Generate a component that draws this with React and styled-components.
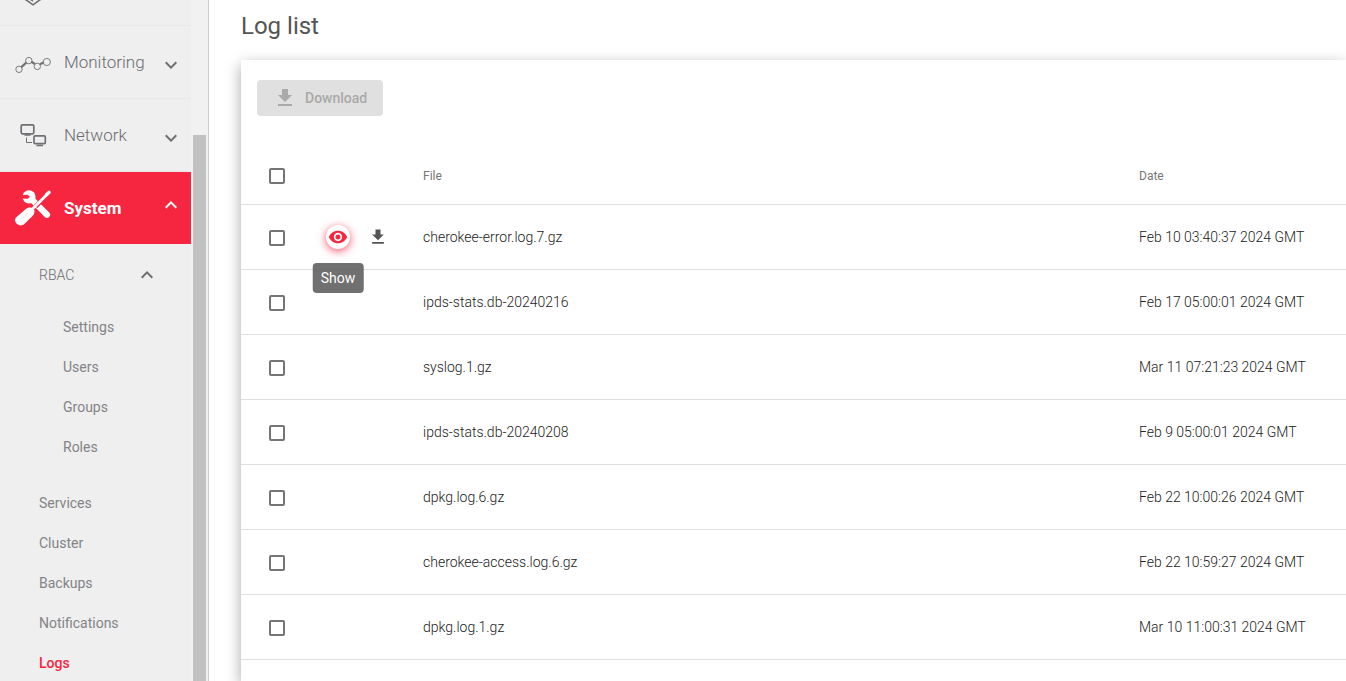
import React, { useState } from "react";
import styled, { createGlobalStyle } from "styled-components";
import {
  MdExpandLess,
  MdExpandMore,
  MdFileDownload,
  MdVisibility,
} from "react-icons/md";

const logs = [
  { file: "cherokee-error.log.7.gz", date: "Feb 10 03:40:37 2024 GMT" },
  { file: "ipds-stats.db-20240216", date: "Feb 17 05:00:01 2024 GMT" },
  { file: "syslog.1.gz", date: "Mar 11 07:21:23 2024 GMT" },
  { file: "ipds-stats.db-20240208", date: "Feb 9 05:00:01 2024 GMT" },
  { file: "dpkg.log.6.gz", date: "Feb 22 10:00:26 2024 GMT" },
  { file: "cherokee-access.log.6.gz", date: "Feb 22 10:59:27 2024 GMT" },
  { file: "dpkg.log.1.gz", date: "Mar 10 11:00:31 2024 GMT" },
];

const rbacLinks = ["Settings", "Users", "Groups", "Roles"];
const systemLinks = ["Services", "Cluster", "Backups", "Notifications", "Logs"];

function ShieldIcon() {
  return (
    <svg width="36" height="36" viewBox="0 0 36 36" fill="none" stroke="#6f6f74">
      <path d="M18 2 L27 6 V28.4 L18 34.8 L9 28.4 V6 Z" strokeWidth="1.6" />
      <path d="M17.6 7 V31.2 L13 28 V10 Z" strokeWidth="1" fill="#6f6f74" />
    </svg>
  );
}

function MonitoringIcon() {
  return (
    <svg width="36" height="36" viewBox="0 0 36 36" fill="none" stroke="#6f6f74">
      <path
        d="M6.3 23.1 L11.4 18.5 M16.3 17.6 L19.8 20 M24.9 20.2 L28.6 18.4"
        strokeWidth="2.2"
      />
      <g strokeWidth="0.9">
        <circle cx="4" cy="25.3" r="3.2" />
        <circle cx="13.8" cy="16.6" r="3.2" />
        <circle cx="22.3" cy="22.4" r="3.2" />
        <circle cx="31.8" cy="18" r="3.6" />
      </g>
    </svg>
  );
}

function NetworkIcon() {
  return (
    <svg width="36" height="36" viewBox="0 0 36 36" fill="none" stroke="#6f6f74">
      <rect x="6.2" y="7.9" width="12.6" height="8.9" rx="1.2" strokeWidth="1.7" />
      <rect x="19" y="18.9" width="11.3" height="7.8" rx="1.2" strokeWidth="1.7" />
      <path d="M9.5 18 H15.5 M21.5 28.4 H28" strokeWidth="1.5" />
      <path d="M11.5 20.5 V25.5 H17" strokeWidth="1" />
    </svg>
  );
}

function ToolsIcon() {
  return (
    <svg width="36" height="36" viewBox="0 0 36 36" fill="none" stroke="#fff">
      <circle cx="14" cy="6.8" r="6.6" fill="#fff" stroke="none" />
      <path d="M6 5.2 L12.4 4.8 L15 6.8 L12.8 8.8 L6 8.6 Z" fill="#f72640" stroke="none" />
      <path d="M17 9.6 L32 24.8" strokeWidth="6.2" strokeLinecap="round" />
      <path d="M20.6 16.6 L29.4 7.6" stroke="#f72640" strokeWidth="4.4" />
      <path d="M17.5 19 L33 3.4" strokeWidth="2.8" />
      <path d="M31.6 4.6 L34 2.4" strokeWidth="3.4" strokeLinecap="round" />
      <path
        d="M10.6 19.2 C12.6 17.4 16 16.8 18.2 18.4 C20.2 20.4 19.6 23.4 18 25.6 L9.4 34 C4.2 38.2 -2.4 32 1 27.4 Z"
        fill="#fff"
        stroke="none"
      />
      <path d="M13.2 22.6 L7.2 28.6" stroke="#fbb5bd" strokeWidth="0.6" />
    </svg>
  );
}

export default function App() {
  const [selected, setSelected] = useState([]);

  const toggle = (file) => {
    setSelected(
      selected.includes(file)
        ? selected.filter((f) => f !== file)
        : [...selected, file]
    );
  };

  const toggleAll = () => {
    setSelected(selected.length === logs.length ? [] : logs.map((l) => l.file));
  };

  return (
    <Layout>
      <GlobalStyle />
      <Sidebar>
        <Menu>
          <HiddenSection href="#security" aria-label="Security">
            <ShieldIcon />
          </HiddenSection>
          <Section>
            <MonitoringIcon />
            <span>Monitoring</span>
            <MdExpandMore className="arrow" />
          </Section>
          <Section>
            <NetworkIcon />
            <span>Network</span>
            <MdExpandMore className="arrow" />
          </Section>
          <Section $active>
            <ToolsIcon />
            <span>System</span>
            <MdExpandLess className="arrow" />
          </Section>
          <SubSection>
            <span>RBAC</span>
            <MdExpandLess />
          </SubSection>
          <LinkList>
            {rbacLinks.map((name) => (
              <MenuLink key={name} href={`#${name.toLowerCase()}`} $nested>
                {name}
              </MenuLink>
            ))}
          </LinkList>
          <LinkList>
            {systemLinks.map((name) => (
              <MenuLink
                key={name}
                href={`#${name.toLowerCase()}`}
                $current={name === "Logs"}
              >
                {name}
              </MenuLink>
            ))}
          </LinkList>
        </Menu>
        <ScrollTrack>
          <ScrollThumb />
        </ScrollTrack>
      </Sidebar>
      <Main>
        <Title>Log list</Title>
        <Card>
          <Toolbar>
            <DownloadButton disabled={selected.length === 0}>
              <MdFileDownload />
              Download
            </DownloadButton>
          </Toolbar>
          <Table>
            <colgroup>
              <col className="check" />
              <col className="actions" />
              <col />
              <col className="date" />
            </colgroup>
            <thead>
              <tr>
                <th>
                  <Checkbox
                    aria-label="Select all"
                    checked={selected.length === logs.length}
                    onChange={toggleAll}
                  />
                </th>
                <th></th>
                <th>File</th>
                <th>Date</th>
              </tr>
            </thead>
            <tbody>
              {logs.map((log, i) => (
                <tr key={log.file}>
                  <td>
                    <Checkbox
                      aria-label={`Select ${log.file}`}
                      checked={selected.includes(log.file)}
                      onChange={() => toggle(log.file)}
                    />
                  </td>
                  <td>
                    {i === 0 && (
                      <Actions>
                        <ActionButton $hovered aria-label="Show">
                          <MdVisibility />
                          <Tooltip>Show</Tooltip>
                        </ActionButton>
                        <ActionButton aria-label="Download">
                          <MdFileDownload />
                        </ActionButton>
                      </Actions>
                    )}
                  </td>
                  <td>{log.file}</td>
                  <td>{log.date}</td>
                </tr>
              ))}
            </tbody>
          </Table>
        </Card>
      </Main>
    </Layout>
  );
}

const GlobalStyle = createGlobalStyle`
  * {
    box-sizing: border-box;
  }
  body {
    margin: 0;
    background: #fff;
    font-family: Roboto, "Liberation Sans", sans-serif;
  }
  button {
    font-family: inherit;
    border: none;
    cursor: pointer;
  }
`;

const Layout = styled.div`
  display: flex;
  height: 100vh;
  overflow: hidden;
`;

const Sidebar = styled.aside`
  display: flex;
  flex: none;
  background: #efefef;
  border-right: 1px solid #ccc;
`;

const Menu = styled.nav`
  display: flex;
  flex-direction: column;
  width: 191px;
  overflow: hidden;
`;

/* scrolled almost out of view, only the bottom of the icon is left */
const HiddenSection = styled.a`
  display: flex;
  flex: none;
  align-items: flex-end;
  height: 26px;
  padding: 0 15px 19px;
  border-bottom: 1px solid #e8e8e8;
`;

const Section = styled.button`
  display: flex;
  flex: none;
  align-items: center;
  gap: 13px;
  height: ${(p) => (p.$active ? 72 : 73)}px;
  padding: 0 8px 0 15px;
  background: ${(p) => (p.$active ? "#f72640" : "transparent")};
  border-bottom: ${(p) => (p.$active ? "none" : "1px solid #e8e8e8")};
  color: ${(p) => (p.$active ? "#fff" : "#6c6c71")};
  font-size: 17px;
  font-weight: ${(p) => (p.$active ? 700 : 300)};
  text-align: left;
  span {
    flex: 1;
    min-width: 0;
  }
  svg {
    flex: none;
  }
  .arrow {
    width: 24px;
    height: 24px;
    margin: ${(p) => (p.$active ? "0 0 6px" : "6px 0 0")};
    color: ${(p) => (p.$active ? "#fff" : "#6f6f74")};
  }
`;

const SubSection = styled.button`
  display: flex;
  flex: none;
  align-items: center;
  justify-content: space-between;
  height: 61px;
  margin-bottom: 2px;
  padding: 0 32px 0 39px;
  background: transparent;
  color: #6c6c71;
  font-size: 14px;
  font-weight: 300;
  svg {
    width: 24px;
    height: 24px;
  }
`;

const LinkList = styled.div`
  display: flex;
  flex: none;
  flex-direction: column;
  margin-bottom: 16px;
`;

const MenuLink = styled.a`
  padding-left: ${(p) => (p.$nested ? 63 : 39)}px;
  color: ${(p) => (p.$current ? "#f72640" : "#838388")};
  font-size: 14px;
  font-weight: ${(p) => (p.$current ? 500 : 400)};
  line-height: 40px;
  text-decoration: none;
`;

const ScrollTrack = styled.div`
  width: 17px;
  padding: 135px 2px 0;
  background: #f1f1f1;
`;

const ScrollThumb = styled.div`
  height: 100%;
  background: #c1c1c1;
`;

const Main = styled.main`
  display: flex;
  flex: 1;
  flex-direction: column;
  min-width: 0;
  padding-left: 32px;
`;

const Title = styled.h1`
  margin: 0;
  padding: 10px 0 18px;
  color: #545454;
  font-size: 24px;
  font-weight: 400;
  line-height: 32px;
`;

const Card = styled.section`
  flex: 1;
  background: #fff;
  box-shadow: 0 5px 14px rgba(0, 0, 0, 0.35);
`;

const Toolbar = styled.div`
  display: flex;
  padding: 20px 16px 32px;
`;

const DownloadButton = styled.button`
  display: flex;
  align-items: center;
  gap: 8px;
  height: 36px;
  padding: 0 16px;
  background: #f72640;
  border-radius: 4px;
  color: #fff;
  font-size: 14px;
  font-weight: 500;
  svg {
    width: 24px;
    height: 24px;
  }
  &:disabled {
    background: #e0e0e0;
    color: #a9a9a9;
    cursor: default;
  }
`;

const Table = styled.table`
  width: 100%;
  table-layout: fixed;
  border-collapse: separate;
  border-spacing: 0;
  .check {
    width: 72px;
  }
  .actions {
    width: 110px;
  }
  .date {
    width: 207px;
  }
  th,
  td {
    padding: 0;
    border-bottom: 1px solid #e0e0e0;
    text-align: left;
  }
  th {
    height: 57px;
    color: #757575;
    font-size: 12px;
    font-weight: 400;
  }
  td {
    height: 65px;
    color: #212121;
    font-size: 14px;
    font-weight: 300;
  }
`;

const Checkbox = styled.input.attrs({ type: "checkbox" })`
  display: block;
  appearance: none;
  width: 16px;
  height: 16px;
  margin: 0 0 0 28px;
  border: 2px solid #757575;
  border-radius: 2px;
  cursor: pointer;
  td > & {
    margin-top: 2px;
  }
  &:checked {
    border-color: #f72640;
    background: #f72640;
  }
`;

const Actions = styled.div`
  display: flex;
  gap: 16px;
  padding-left: 13px;
`;

const ActionButton = styled.button`
  display: flex;
  align-items: center;
  justify-content: center;
  position: relative;
  width: 24px;
  height: 24px;
  padding: 0;
  background: #fff;
  border-radius: 50%;
  color: ${(p) => (p.$hovered ? "#f72640" : "#545454")};
  box-shadow: ${(p) =>
    p.$hovered ? "0 2px 8px rgba(247, 38, 64, 0.8)" : "none"};
  svg {
    width: 20px;
    height: 20px;
  }
`;

const Tooltip = styled.span`
  position: absolute;
  top: 38px;
  left: 50%;
  transform: translateX(-50%);
  padding: 0 8px;
  background: rgba(97, 97, 97, 0.9);
  border-radius: 4px;
  color: #fff;
  font-size: 14px;
  line-height: 30px;
`;
